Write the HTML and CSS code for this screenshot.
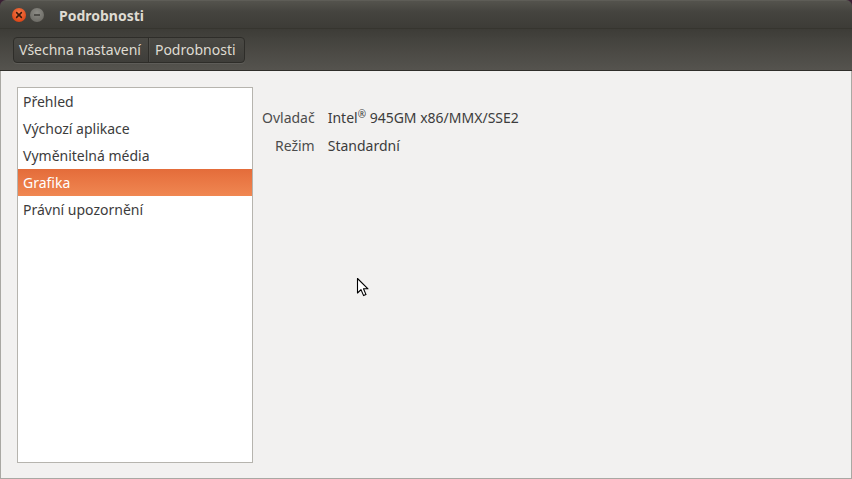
FILE: index.html
```html
<!DOCTYPE html>
<html lang="cs">
<head>
<meta charset="utf-8">
<title>Podrobnosti</title>
<link rel="stylesheet" href="styles.css">
</head>
<body>
<div class="window">
  <header class="titlebar">
    <div class="winbtns">
      <span class="wbtn close"><svg width="14" height="14" viewBox="0 0 14 14"><path d="M4.6 4.6 L9.4 9.4 M9.4 4.6 L4.6 9.4" stroke="#3a1a0c" stroke-width="1.5" stroke-linecap="round"/></svg></span>
      <span class="wbtn min"><svg width="14" height="14" viewBox="0 0 14 14"><path d="M4 7 H10" stroke="#3c3b37" stroke-width="1.5"/></svg></span>
    </div>
    <span class="title">Podrobnosti</span>
  </header>
  <div class="toolbar">
    <nav class="crumbs">
      <span class="crumb">Všechna nastavení</span>
      <span class="crumb">Podrobnosti</span>
    </nav>
  </div>
  <main class="content">
    <ul class="list">
      <li>Přehled</li>
      <li>Výchozí aplikace</li>
      <li>Vyměnitelná média</li>
      <li class="sel">Grafika</li>
      <li>Právní upozornění</li>
    </ul>
    <section class="details">
      <div class="grid">
        <span class="lbl">Ovladač</span><span class="val">Intel<sup>®</sup> 945GM x86/MMX/SSE2</span>
        <span class="lbl">Režim</span><span class="val">Standardní</span>
      </div>
    </section>
  </main>
  <svg class="cursor" width="14" height="22" viewBox="0 0 14 22"><path d="M1.5 1.5 V16 L5 12.6 L7.6 18.6 L10 17.6 L7.5 11.8 H12 Z" fill="#fff" stroke="#000" stroke-width="1.1" stroke-linejoin="round"/></svg>
</div>
</body>
</html>
```
FILE: styles.css
```css
html, body {
  margin: 0;
  padding: 0;
  background: #3a2034;
}
body {
  width: 852px;
  height: 479px;
  overflow: hidden;
  font-family: "Noto Sans", "DejaVu Sans", sans-serif;
  font-size: 14px;
}
.window {
  position: relative;
  width: 852px;
  height: 479px;
  border-radius: 6px 6px 0 0;
  overflow: hidden;
  display: flex;
  flex-direction: column;
}
.titlebar {
  height: 28px;
  flex: none;
  display: flex;
  align-items: center;
  background: linear-gradient(#54534d, #45443f 40%, #3d3c37);
  border-top: 1px solid #5e5d57;
  box-sizing: border-box;
}
.winbtns {
  display: flex;
  gap: 4px;
  margin-left: 12px;
  margin-top: 1px;
}
.wbtn {
  width: 14px;
  height: 14px;
  border-radius: 50%;
  display: flex;
}
.close {
  background: radial-gradient(circle at 50% 35%, #f57a4a, #df4a1b 70%, #c23d12);
}
.min {
  background: radial-gradient(circle at 50% 35%, #8d8c86, #6e6d67 75%, #5a5954);
}
.title {
  margin-left: 15px;
  color: #dfdbd2;
  font-weight: bold;
  font-size: 14px;
  margin-top: 1px;
}
.toolbar {
  height: 43px;
  flex: none;
  box-sizing: border-box;
  background: linear-gradient(#3d3c37, #45443f 30%, #55534e);
  border-top: 1px solid #36352f;
  border-bottom: 1px solid #2f2e2a;
  display: flex;
  align-items: center;
  padding-left: 13px;
}
.crumbs {
  display: flex;
  height: 26px;
  box-sizing: border-box;
  margin-top: 1px;
  border: 1px solid #2e2d29;
  border-radius: 4px;
  background: linear-gradient(#4a4944, #3f3e3a);
  box-shadow: 0 1px 0 rgba(255,255,255,0.08);
}
.crumb {
  display: flex;
  align-items: center;
  padding: 0 7px 1px 5px;
  color: #dfdbd2;
  font-size: 14px;
}
.crumb + .crumb {
  padding-left: 6px;
  padding-right: 8px;
  border-left: 1px solid #2e2d29;
  box-shadow: inset 1px 0 0 rgba(255,255,255,0.05);
}
.content {
  flex: 1;
  background: #f2f1f0;
  border-left: 1px solid #a9a8a3;
  border-right: 1px solid #a9a8a3;
  border-bottom: 1px solid #a9a8a3;
  display: flex;
  padding: 16px 0 15px 16px;
}
.list {
  list-style: none;
  margin: 0;
  padding: 0;
  width: 234px;
  background: #fff;
  border: 1px solid #b6b4ae;
  flex: none;
}
.list li {
  height: 27px;
  line-height: 27px;
  padding-left: 5px;
  color: #3c3c3c;
  font-size: 14px;
}
.list li.sel {
  background: linear-gradient(#e46c3a, #f08752);
  color: #fff;
}
.details {
  padding-left: 9px;
  padding-top: 17px;
}
.grid {
  display: grid;
  grid-template-columns: auto auto;
  column-gap: 13px;
  row-gap: 0;
}
.lbl {
  text-align: right;
  color: #4c4c4c;
  line-height: 28px;
}
.val {
  color: #3c3c3c;
  line-height: 28px;
}
.val sup {
  font-size: 10px;
  vertical-align: 5px;
  line-height: 0;
}
.cursor {
  position: absolute;
  left: 356px;
  top: 277px;
}
```
